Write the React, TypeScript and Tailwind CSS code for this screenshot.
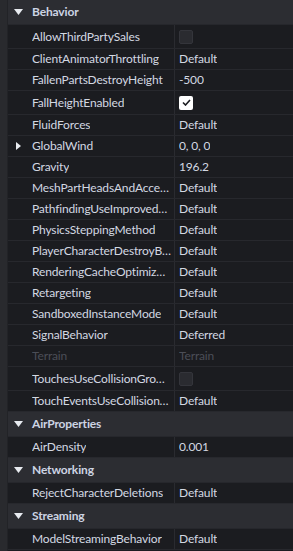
import React from 'react';

type Row = {
  name: string;
  value?: string;
  kind?: 'text' | 'check' | 'uncheck';
  disabled?: boolean;
  expandable?: boolean;
};

type Section = { title: string; rows: Row[] };

const sections: Section[] = [
  {
    title: 'Behavior',
    rows: [
      { name: 'AllowThirdPartySales', kind: 'uncheck' },
      { name: 'ClientAnimatorThrottling', value: 'Default' },
      { name: 'FallenPartsDestroyHeight', value: '-500' },
      { name: 'FallHeightEnabled', kind: 'check' },
      { name: 'FluidForces', value: 'Default' },
      { name: 'GlobalWind', value: '0, 0, 0', expandable: true },
      { name: 'Gravity', value: '196.2' },
      { name: 'MeshPartHeadsAndAccessories', value: 'Default' },
      { name: 'PathfindingUseImprovedSearch', value: 'Default' },
      { name: 'PhysicsSteppingMethod', value: 'Default' },
      { name: 'PlayerCharacterDestroyBehavior', value: 'Default' },
      { name: 'RenderingCacheOptimizations', value: 'Default' },
      { name: 'Retargeting', value: 'Default' },
      { name: 'SandboxedInstanceMode', value: 'Default' },
      { name: 'SignalBehavior', value: 'Deferred' },
      { name: 'Terrain', value: 'Terrain', disabled: true },
      { name: 'TouchesUseCollisionGroups', kind: 'uncheck' },
      { name: 'TouchEventsUseCollisionGroups', value: 'Default' },
    ],
  },
  { title: 'AirProperties', rows: [{ name: 'AirDensity', value: '0.001' }] },
  { title: 'Networking', rows: [{ name: 'RejectCharacterDeletions', value: 'Default' }] },
  { title: 'Streaming', rows: [{ name: 'ModelStreamingBehavior', value: 'Default' }] },
];

function DownArrow() {
  return (
    <svg width="9" height="6" viewBox="0 0 9 6" className="shrink-0">
      <path d="M0 0 L9 0 L4.5 6 Z" fill="#e8ebf0" />
    </svg>
  );
}

function RightArrow() {
  return (
    <svg width="5" height="8" viewBox="0 0 5 8" className="shrink-0">
      <path d="M0 0 L5 4 L0 8 Z" fill="#e8ebf0" />
    </svg>
  );
}

function PropRow({ row }: { row: Row }) {
  const tall = row.kind === 'check' || row.kind === 'uncheck';
  const color = row.disabled ? 'text-[#4b4e57]' : 'text-[#d3d8e2]';
  return (
    <div
      className={`flex bg-[#1b1c20] border-b border-[#27282d] ${tall ? 'h-[24px]' : 'h-[21px]'}`}
    >
      <div className="w-[167px] shrink-0 flex items-center border-r border-[#2a2b30] pr-[3px]">
        <div className="w-[24px] shrink-0 flex items-center justify-center pr-[4px]">
          {row.expandable && <RightArrow />}
        </div>
        <span className={`truncate ${color}`}>{row.name}</span>
      </div>
      <div className="flex-1 flex items-center pl-[4px] min-w-0">
        {row.kind === 'check' && (
          <div className="w-[14px] h-[14px] rounded-[2px] bg-white flex items-center justify-center">
            <svg width="9" height="7" viewBox="0 0 9 7">
              <path d="M1 3.5 L3.5 6 L8 1" stroke="#1b1c20" strokeWidth="1.6" fill="none" />
            </svg>
          </div>
        )}
        {row.kind === 'uncheck' && (
          <div className="w-[14px] h-[14px] rounded-[2px] bg-[#2a2b30] border border-[#34353b]" />
        )}
        {!row.kind || row.kind === 'text' ? (
          <span className={`truncate ${color}`}>{row.value}</span>
        ) : null}
      </div>
    </div>
  );
}

export default function App() {
  return (
    <div
      className="w-[293px] h-[551px] overflow-hidden bg-[#1b1c20] flex text-[12px] leading-none tracking-[-0.15px]"
      style={{ fontFamily: 'Lato, "Open Sans", sans-serif' }}
    >
      {/* left gutter */}
      <div className="w-[8px] shrink-0 bg-[#292a2e] border-r border-[#222327]" />
      <div className="flex-1 flex flex-col min-w-0">
        {sections.map((s) => (
          <div key={s.title}>
            <div className="h-[25px] bg-[#2c2d32] border-b border-[#26272c] flex items-center">
              <div className="w-[24px] flex justify-center pr-[4px]">
                <DownArrow />
              </div>
              <span className="font-bold text-[#cdd4e3]">{s.title}</span>
            </div>
            {s.rows.map((r) => (
              <PropRow key={r.name} row={r} />
            ))}
          </div>
        ))}
      </div>
    </div>
  );
}
